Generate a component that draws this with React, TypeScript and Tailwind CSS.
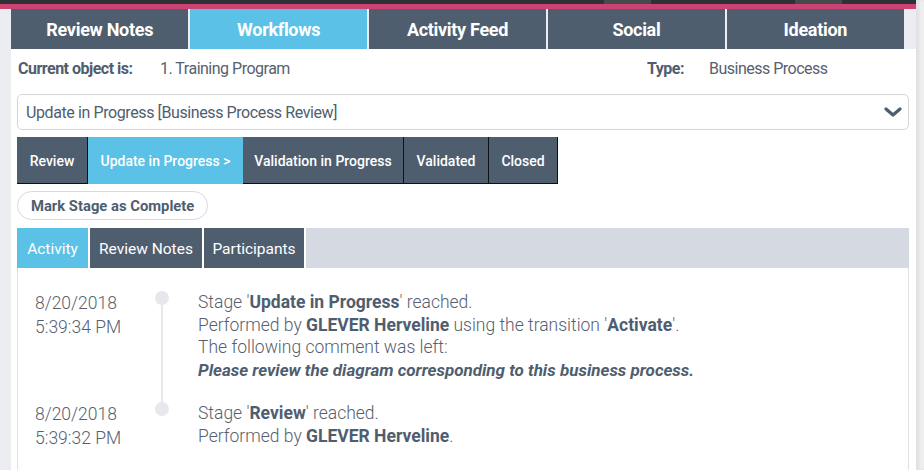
const TOP_TABS = ["Review Notes", "Workflows", "Activity Feed", "Social", "Ideation"];

const STAGES = [
  { label: "Review", w: "w-[71px]", active: false },
  { label: "Update in Progress >", w: "w-[155px]", active: true },
  { label: "Validation in Progress", w: "w-[161px]", active: false },
  { label: "Validated", w: "w-[85px]", active: false },
  { label: "Closed", w: "w-[69px]", active: false },
];

const SUB_TABS = [
  { label: "Activity", w: "w-[73px]", active: true },
  { label: "Review Notes", w: "w-[114px]", active: false },
  { label: "Participants", w: "w-[102px]", active: false },
];

function Dot() {
  return <div className="w-[14px] h-[14px] rounded-full bg-[#e6e8ec] shrink-0" />;
}

export default function App() {
  return (
    <div className="w-[924px] h-[470px] flex overflow-hidden bg-white font-['Roboto',sans-serif]">
      <div className="w-[916px] flex flex-col">
        {/* top chrome */}
        <div className="h-[4px] flex bg-[#2e3236]">
          <div className="w-[604px]" />
          <div className="w-[47px] bg-[#47494d]" />
          <div className="w-[144px]" />
          <div className="w-[47px] bg-[#47494d]" />
        </div>
        <div className="h-[5px] bg-[#cc4272]" />

        <div className="flex-1 flex flex-col bg-[#ebedf0] pl-[11px]">
          {/* main tabs */}
          <div className="h-[40px] flex gap-[1.5px] mr-[12px]">
            {TOP_TABS.map((t) => (
              <div
                key={t}
                className={`flex-1 flex items-center justify-center text-white font-bold text-[18px] tracking-[-0.3px] ${
                  t === "Workflows" ? "bg-[#5bc1e6]" : "bg-[#4f5e6f]"
                }`}
              >
                {t}
              </div>
            ))}
          </div>

          <div className="flex-1 flex flex-col bg-white pl-[6px] pr-[7px]">
            {/* object info */}
            <div className="h-[20px] mt-[10px] flex items-center text-[16px] text-[#4f5e6f] tracking-[-0.5px]">
              <span className="font-bold w-[143px] pl-[1px]">Current object is:</span>
              <span className="text-[#56616f] w-[487px]">1. Training Program</span>
              <span className="font-bold w-[62px]">Type:</span>
              <span className="text-[#56616f]">Business Process</span>
            </div>

            {/* workflow select */}
            <div className="mt-[15px] h-[36px] border border-[#d6d6d6] rounded-[5px] flex items-center justify-between pl-[8px] pr-[6px]">
              <span className="text-[16px] text-[#4f5e6f] tracking-[-0.4px] pt-[1px]">
                Update in Progress [Business Process Review]
              </span>
              <svg width="18" height="12" viewBox="0 0 18 12" className="text-[#4f5e6f]">
                <path d="M2 3l7 6 7-6" fill="none" stroke="currentColor" strokeWidth="3.2" strokeLinecap="round" strokeLinejoin="round" />
              </svg>
            </div>

            {/* stages */}
            <div className="mt-[7px] h-[47px] flex">
              {STAGES.map((s) => (
                <div
                  key={s.label}
                  className={`${s.w} flex items-center justify-center pt-[2px] text-white text-[14px] font-medium ${
                    s.active ? "bg-[#5bc1e6]" : "bg-[#4f5e6f] border-r border-b border-[#111]"
                  }`}
                >
                  {s.label}
                </div>
              ))}
            </div>

            <div className="mt-[7px]">
              <button className="h-[29px] px-[13px] pt-[2px] rounded-full border border-[#d6d8de] text-[14.8px] font-bold text-[#4f5e6f] bg-white">
                Mark Stage as Complete
              </button>
            </div>

            {/* sub tabs */}
            <div className="mt-[8px] h-[40px] flex bg-[#d5dae2]">
              {SUB_TABS.map((s) => (
                <div
                  key={s.label}
                  className={`${s.w} flex items-center justify-center pt-[3px] text-white text-[15.5px] border-r-2 border-white ${
                    s.active ? "bg-[#5bc1e6]" : "bg-[#4f5e6f]"
                  }`}
                >
                  {s.label}
                </div>
              ))}
            </div>

            {/* activity */}
            <div className="flex-1 border-x border-[#e0e1e7] pt-[23px] pl-[17px] text-[17.5px] font-light text-[#56606f] leading-[22.5px]">
              <div className="flex">
                <div className="w-[109px] leading-[24px]">
                  <div>8/20/2018</div>
                  <div>5:39:34 PM</div>
                </div>
                <div className="w-[36px] flex flex-col items-center">
                  <Dot />
                  <div className="w-[2px] flex-1 bg-[#e6e8ec]" />
                </div>
                <div className="pl-[18px] pb-[21px]">
                  <div>
                    Stage '<b className="font-bold text-[#4f5e6f]">Update in Progress</b>' reached.
                  </div>
                  <div>
                    Performed by <b className="font-bold text-[#4f5e6f]">GLEVER Herveline</b> using the transition '
                    <b className="font-bold text-[#4f5e6f]">Activate</b>'.
                  </div>
                  <div>The following comment was left:</div>
                  <div className="font-bold italic text-[17px] text-[#4f5e6f]">
                    Please review the diagram corresponding to this business process.
                  </div>
                </div>
              </div>
              <div className="flex">
                <div className="w-[109px] leading-[24px]">
                  <div>8/20/2018</div>
                  <div>5:39:32 PM</div>
                </div>
                <div className="w-[36px] flex flex-col items-center">
                  <div className="w-[2px] h-[4px] bg-[#e6e8ec] -mt-[4px]" />
                  <Dot />
                </div>
                <div className="pl-[18px]">
                  <div>
                    Stage '<b className="font-bold text-[#4f5e6f]">Review</b>' reached.
                  </div>
                  <div>
                    Performed by <b className="font-bold text-[#4f5e6f]">GLEVER Herveline</b>.
                  </div>
                </div>
              </div>
            </div>
          </div>
        </div>
      </div>
      {/* scrollbar */}
      <div className="w-[8px] bg-[#eeeeef] border-l border-[#e2e2e4] shadow-[inset_2px_0_3px_rgba(0,0,0,0.06)]" />
    </div>
  );
}
